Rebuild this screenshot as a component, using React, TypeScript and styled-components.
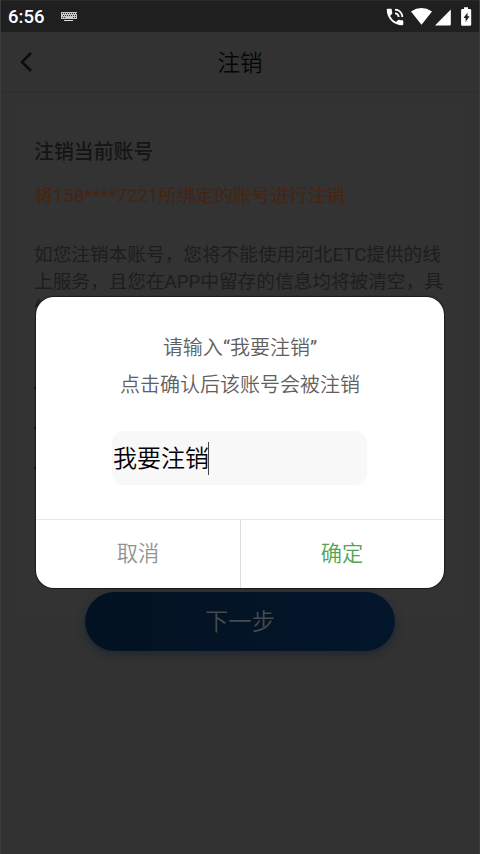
import React from "react";
import styled, { createGlobalStyle } from "styled-components";

const GlobalStyle = createGlobalStyle`
  * { box-sizing: border-box; }
  html, body { margin: 0; padding: 0; background: #323232; }
  body { font-family: Roboto, "Noto Sans CJK SC", sans-serif; }
  button { font: inherit; border: 0; padding: 0; margin: 0; background: none; }
`;

const Screen = styled.div`
  position: relative;
  width: 480px;
  height: 854px;
  overflow: hidden;
  display: flex;
  flex-direction: column;
  background: #323232;
  border-left: 1px solid #3a3a3a;
  border-right: 1px solid #3a3a3a;
`;

const StatusBar = styled.div`
  height: 32px;
  flex: none;
  display: flex;
  align-items: center;
  padding: 1px 6px 0 7px;
  background: #1f1f1f;
  border-top: 1px solid #2a2a2a;
`;

const Clock = styled.span`
  width: 53px;
  font-size: 18.5px;
  font-weight: 500;
  line-height: 28px;
  color: #fff;
`;

const StatusIcons = styled.div`
  margin-left: auto;
  display: flex;
  align-items: center;
  gap: 5px;
  margin-right: -1px;
`;

const Header = styled.header`
  height: 60px;
  flex: none;
  display: grid;
  grid-template-columns: 60px 1fr 60px;
  align-items: center;
  border-bottom: 1px solid #2c2c2c;
`;

const BackButton = styled.button`
  height: 59px;
  padding-left: 18px;
  display: flex;
  align-items: center;
`;

const Title = styled.h1`
  margin: 0;
  padding-top: 2px;
  font-size: 22.5px;
  font-weight: 350;
  line-height: 58px;
  text-align: center;
  color: #060606;
`;

const Card = styled.section`
  height: 513px;
  flex: none;
  margin: 11px 14px 0;
  padding: 35px 19px 0;
  border-radius: 8px;
  background: #333333;
`;

const CardTitle = styled.h2`
  margin: 0;
  font-size: 19.9px;
  font-weight: 500;
  line-height: 30px;
  color: #151515;
`;

const Warning = styled.p`
  margin: 14px 0 0;
  font-size: 18.67px;
  line-height: 28px;
  color: #462410;
`;

const Paragraph = styled.p`
  margin: 32px -10px 0 0;
  font-size: 18.67px;
  line-height: 26.5px;
  color: #1d1d1d;
`;

const Line = styled.span`
  display: block;
  white-space: nowrap;
`;

const Points = styled.ul`
  list-style: none;
  margin: 65px 0 0;
  padding: 0;
  display: grid;
  gap: 38px;
`;

const Point = styled.li`
  width: 3px;
  height: 2px;
  background: #0c0c0c;
`;

const NextButton = styled.button`
  align-self: center;
  flex: none;
  width: 310px;
  height: 59px;
  margin-top: -24px;
  padding-top: 2px;
  border-radius: 30px;
  background: linear-gradient(90deg, #031222, #03162b);
  box-shadow: 0 3px 8px rgba(12, 28, 48, 0.5);
  font-size: 23.3px;
  font-weight: 350;
  line-height: 57px;
  color: #454a4e;
`;

const Overlay = styled.div`
  position: absolute;
  inset: 0;
  padding: 297px 35px 0;
`;

const Dialog = styled.div`
  height: 291px;
  display: flex;
  flex-direction: column;
  overflow: hidden;
  border-radius: 18px;
  background: #fff;
  box-shadow: 0 0 1px 1px #1b1b1b;
`;

const Message = styled.p`
  margin: 33px 0 0;
  font-size: 20px;
  font-weight: 350;
  line-height: 36.5px;
  text-align: center;
  color: #606060;
`;

const Quote = styled.span`
  font-weight: 400;
`;

const Field = styled.div`
  width: 255px;
  height: 54px;
  margin: 28px 0 0 76px;
  display: flex;
  align-items: center;
  border-radius: 12px;
  background: #f8f8f8;
  font-size: 24px;
  font-weight: 350;
  color: #000;
`;

const FieldText = styled.span`
  padding: 0 0 3px 1px;
  margin-right: -1px;
`;

const Caret = styled.span`
  width: 1px;
  height: 33px;
  background: #444;
`;

const Actions = styled.div`
  height: 69px;
  margin-top: auto;
  display: grid;
  grid-template-columns: 204px 1fr;
  border-top: 1px solid #e9e9e9;
`;

const Action = styled.button<{ $confirm?: boolean }>`
  border-left: ${(p) => (p.$confirm ? "1px solid #dedede" : "0")};
  padding-right: ${(p) => (p.$confirm ? "1px" : "0")};
  font-size: 21.2px;
  font-weight: 350;
  line-height: 68px;
  color: ${(p) => (p.$confirm ? "#4fa554" : "#929292")};
`;

const KeyboardIcon = () => (
  <svg width="17" height="10" viewBox="0 0 17 10">
    <path d="M0 0h16v7H0z" fill="#c8c8c8" />
    <path
      d="M1 1.5h15M2 3.5h13M1 5.5h3M12 5.5h3"
      stroke="#303030"
      strokeWidth="1"
      strokeDasharray="1 1"
    />
    <path d="M3 8.5h9" stroke="#ddd" strokeWidth="1" />
  </svg>
);

const CallIcon = () => (
  <svg width="22" height="22" viewBox="0 0 24 24" fill="#fff">
    <path d="M20 15.5c-1.25 0-2.45-.2-3.57-.57a1.02 1.02 0 0 0-1.02.24l-2.2 2.2a15.05 15.05 0 0 1-6.59-6.58l2.2-2.21c.28-.27.36-.66.25-1.01A11.36 11.36 0 0 1 8.5 4c0-.55-.45-1-1-1H4c-.55 0-1 .45-1 1 0 9.39 7.61 17 17 17 .55 0 1-.45 1-1v-3.5c0-.55-.45-1-1-1zM19 12h2a9 9 0 0 0-9-9v2c3.87 0 7 3.13 7 7zm-4 0h2c0-2.76-2.24-5-5-5v2c1.66 0 3 1.34 3 3z" />
  </svg>
);

const SignalIcons = () => (
  <svg width="63" height="20" viewBox="0 0 63 20" fill="#fff">
    <path d="M0 4.500Q10.500-2.300 21 4.500L10.500 17.800z" />
    <path d="M24 18.500 39.800 2.500V17.500q0 1-1 1z" />
    <path
      fillRule="evenodd"
      d="M53 .2h4v1.900h2q1.200 0 1.200 1.200V17.500q0 1.200-1.200 1.200h-7.700q-1.200 0-1.200-1.200V3.300q0-1.200 1.200-1.200H53zM56.500 5.600l-4 5.500h2.100v4l4-5.800h-2.100z"
    />
  </svg>
);

export default function App() {
  return (
    <>
      <GlobalStyle />
      <Screen>
        <StatusBar>
          <Clock>6:56</Clock>
          <KeyboardIcon />
          <StatusIcons>
            <CallIcon />
            <SignalIcons />
          </StatusIcons>
        </StatusBar>
        <Header>
          <BackButton aria-label="返回">
            <svg width="16" height="22" viewBox="0 0 16 22" fill="none">
              <path d="M12 2 3 11l9 9" stroke="#0c0c0c" strokeWidth="2.6" />
            </svg>
          </BackButton>
          <Title>注销</Title>
        </Header>
        <Card>
          <CardTitle>注销当前账号</CardTitle>
          <Warning>将158****7221所绑定的账号进行注销</Warning>
          <Paragraph>
            <Line>如您注销本账号，您将不能使用河北ETC提供的线</Line>
            <Line>上服务，且您在APP中留存的信息均将被清空，具</Line>
            <Line>体</Line>
          </Paragraph>
          <Points>
            <Point />
            <Point />
            <Point />
          </Points>
        </Card>
        <NextButton>下一步</NextButton>
        <Overlay>
          <Dialog role="dialog">
            <Message>
              请输入<Quote>“</Quote>我要注销<Quote>”</Quote>
              <br />
              点击确认后该账号会被注销
            </Message>
            <Field>
              <FieldText>我要注销</FieldText>
              <Caret />
            </Field>
            <Actions>
              <Action>取消</Action>
              <Action $confirm>确定</Action>
            </Actions>
          </Dialog>
        </Overlay>
      </Screen>
    </>
  );
}
